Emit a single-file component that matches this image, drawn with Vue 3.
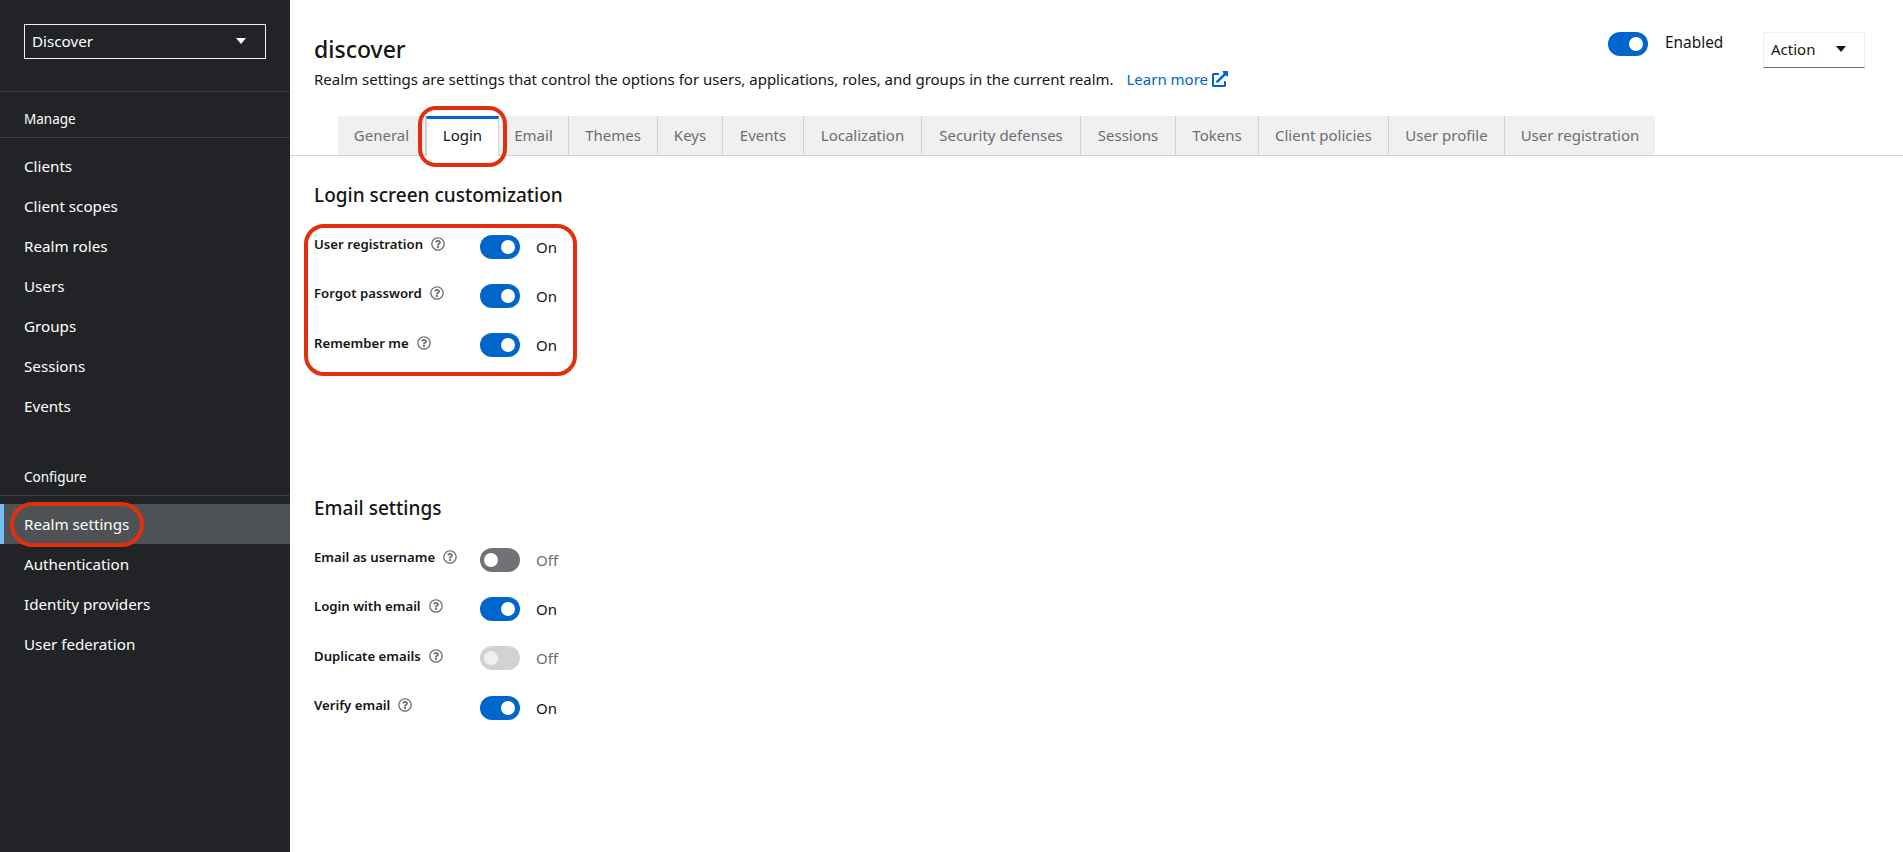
<script setup>
const manage = ['Clients', 'Client scopes', 'Realm roles', 'Users', 'Groups', 'Sessions', 'Events']
const configure = ['Realm settings', 'Authentication', 'Identity providers', 'User federation']
const tabs = [
  { name: 'General', w: 88 }, { name: 'Login', w: 73, active: true }, { name: 'Email', w: 70 },
  { name: 'Themes', w: 89 }, { name: 'Keys', w: 65 }, { name: 'Events', w: 81 },
  { name: 'Localization', w: 118 }, { name: 'Security defenses', w: 159 }, { name: 'Sessions', w: 95 },
  { name: 'Tokens', w: 83 }, { name: 'Client policies', w: 130 }, { name: 'User profile', w: 116 },
  { name: 'User registration', w: 150 }
]
const loginRows = [
  { label: 'User registration', on: true },
  { label: 'Forgot password', on: true },
  { label: 'Remember me', on: true }
]
const emailRows = [
  { label: 'Email as username', on: false },
  { label: 'Login with email', on: true },
  { label: 'Duplicate emails', on: false, disabled: true },
  { label: 'Verify email', on: true }
]
const q = 'M256 8C119.043 8 8 119.083 8 256c0 136.997 111.043 248 248 248s248-111.003 248-248C504 119.083 392.957 8 256 8zm0 448c-110.532 0-200-89.431-200-200 0-110.495 89.472-200 200-200 110.491 0 200 89.471 200 200 0 110.53-89.431 200-200 200zm107.244-255.2c0 67.052-72.421 68.084-72.421 92.863V300c0 6.627-5.373 12-12 12h-45.647c-6.627 0-12-5.373-12-12v-8.659c0-35.745 27.1-50.034 47.579-61.516 17.561-9.845 28.324-16.541 28.324-29.579 0-17.246-21.999-28.693-39.784-28.693-23.189 0-33.894 10.977-48.942 29.969-4.057 5.12-11.46 6.071-16.666 2.124l-27.824-21.098c-5.107-3.872-6.251-11.066-2.644-16.363C184.846 131.491 214.94 112 261.794 112c49.071 0 101.45 38.304 101.45 88.8zM298 368c0 23.159-18.841 42-42 42s-42-18.841-42-42 18.841-42 42-42 42 18.841 42 42z'
</script>

<template>
  <div class="page">
    <aside class="sidebar">
      <div class="realm-wrap">
        <div class="realm">
          <span>Discover</span>
          <svg class="caret" viewBox="0 0 10 6" width="10" height="6"><path d="M0 0h10L5 6z" fill="#fff" /></svg>
        </div>
      </div>
      <div class="group-title first">Manage</div>
      <ul class="nav">
        <li v-for="item in manage" :key="item">{{ item }}</li>
      </ul>
      <div class="group-title second">Configure</div>
      <ul class="nav">
        <li v-for="item in configure" :key="item" :class="{ current: item === 'Realm settings' }">{{ item }}</li>
      </ul>
      <div class="mark mark-realm"></div>
    </aside>

    <main class="main">
      <header class="head">
        <div>
          <h1>discover</h1>
          <p class="desc">
            Realm settings are settings that control the options for users, applications, roles, and groups in the current realm.
            <a class="learn">Learn more
              <svg viewBox="0 0 512 512" width="16" height="16"><path fill="#06c" d="M432 320h-32a16 16 0 0 0-16 16v112H64V128h144a16 16 0 0 0 16-16V80a16 16 0 0 0-16-16H48a48 48 0 0 0-48 48v352a48 48 0 0 0 48 48h352a48 48 0 0 0 48-48V336a16 16 0 0 0-16-16zM488 0H360c-21.37 0-32.05 25.91-17 41l35.73 35.73L135 320.37a24 24 0 0 0 0 34L157.67 377a24 24 0 0 0 34 0l243.61-243.68L471 169c15 15 41 4.5 41-17V24a24 24 0 0 0-24-24z" /></svg>
            </a>
          </p>
        </div>
        <div class="tools">
          <span class="switch on"><i></i></span>
          <span class="enabled">Enabled</span>
          <div class="action">
            <span>Action</span>
            <svg viewBox="0 0 10 6" width="10" height="6"><path d="M0 0h10L5 6z" fill="#151515" /></svg>
          </div>
        </div>
      </header>

      <div class="tabbar">
        <div
          v-for="t in tabs"
          :key="t.name"
          class="tab"
          :class="{ active: t.active }"
          :style="{ width: t.w + 'px' }"
        >{{ t.name }}</div>
      </div>

      <section class="section">
        <h2>Login screen customization</h2>
        <div class="rows">
          <div v-for="r in loginRows" :key="r.label" class="row">
            <div class="label">
              <b>{{ r.label }}</b>
              <svg viewBox="0 0 512 512" width="14" height="14"><path fill="#6a6e73" :d="q" /></svg>
            </div>
            <span class="switch" :class="{ on: r.on }"><i></i></span>
            <span class="state">On</span>
          </div>
        </div>
      </section>

      <section class="section email">
        <h2>Email settings</h2>
        <div class="rows">
          <div v-for="r in emailRows" :key="r.label" class="row">
            <div class="label">
              <b>{{ r.label }}</b>
              <svg viewBox="0 0 512 512" width="14" height="14"><path fill="#6a6e73" :d="q" /></svg>
            </div>
            <span class="switch" :class="{ on: r.on, disabled: r.disabled }"><i></i></span>
            <span class="state" :class="{ off: !r.on }">{{ r.on ? 'On' : 'Off' }}</span>
          </div>
        </div>
      </section>

      <div class="mark mark-tab"></div>
      <div class="mark mark-rows"></div>
    </main>
  </div>
</template>

<style>
html, body { margin: 0; background: #fff; overflow: hidden; }
</style>

<style scoped>
.page {
  display: flex;
  height: 852px;
  font-family: "Noto Sans", "Open Sans", sans-serif;
  color: #151515;
}
.sidebar {
  position: relative;
  width: 290px;
  flex: none;
  background: #212326;
  color: #fff;
  font-size: 15.2px;
}
.realm-wrap {
  padding: 24px 24px 32px;
  border-bottom: 1px solid #3c3f42;
}
.realm {
  height: 35px;
  box-sizing: border-box;
  border: 1px solid #f0f0f0;
  padding: 0 19px 2px 7px;
  display: flex;
  align-items: center;
  justify-content: space-between;
}
.group-title {
  font-size: 13.5px;
  padding-left: 24px;
  display: flex;
  align-items: center;
  border-bottom: 1px solid #3c3f42;
}
.group-title.first {
  height: 37px;
  padding-top: 8px;
}
.group-title.second {
  height: 37px;
  margin-top: 32px;
}
.nav {
  list-style: none;
  margin: 0;
  padding: 8px 0 0;
}
.nav li {
  height: 40px;
  line-height: 40px;
  padding-left: 24px;
}
.nav li.current {
  background: #4f5255;
  box-shadow: inset 4px 0 0 #73bcf7;
}
.main {
  position: relative;
  flex: 1;
  min-width: 0;
}
.head {
  display: flex;
  justify-content: space-between;
  padding: 34px 38px 0 24px;
  height: 116px;
  box-sizing: border-box;
}
h1 {
  margin: 0;
  font-size: 23px;
  line-height: 30px;
  font-weight: 500;
}
.desc {
  margin: 3px 0 0;
  font-size: 15px;
  line-height: 24px;
}
.learn {
  color: #06c;
  margin-left: 9px;
  display: inline-flex;
  align-items: center;
  gap: 4px;
  vertical-align: bottom;
}
.tools {
  display: flex;
  align-items: flex-start;
  margin-top: -2px;
  height: 36px;
}
.enabled {
  font-size: 15.4px;
  line-height: 22px;
  margin-left: 17px;
  width: 98px;
}
.action {
  width: 102px;
  height: 36px;
  box-sizing: border-box;
  border: 1px solid #f0f0f0;
  border-bottom-color: #6a6e73;
  display: flex;
  align-items: center;
  justify-content: space-between;
  padding: 0 18px 2px 7px;
  font-size: 15px;
}
.tabbar {
  display: flex;
  padding-left: 48px;
  height: 39px;
  border-bottom: 1px solid #d2d2d2;
}
.tab {
  height: 39px;
  box-sizing: border-box;
  flex: none;
  background: #f0f0f0;
  color: #6a6e73;
  border-right: 1px solid #d2d2d2;
  font-size: 15px;
  display: flex;
  align-items: center;
  justify-content: center;
  padding-bottom: 2px;
}
.tab.active {
  background: #fff;
  color: #151515;
  height: 40px;
  border-top: 3px solid #06c;
  border-left: 1px solid #d2d2d2;
  padding-bottom: 5px;
}
.tab:last-child { border-right: 0; }
.section {
  padding: 25px 24px 0;
}
.section.email { padding-top: 124px; }
h2 {
  margin: 0;
  font-size: 19px;
  line-height: 28px;
  font-weight: 500;
}
.rows { margin-top: 13px; }
.row {
  height: 49.33px;
  display: flex;
  align-items: center;
}
.label {
  width: 166px;
  flex: none;
  display: flex;
  align-items: center;
  gap: 8px;
  margin-top: -5px;
}
.label b {
  font-size: 13.2px;
  font-weight: 600;
}
.switch {
  width: 40px;
  height: 24px;
  border-radius: 12px;
  background: #707276;
  flex: none;
  position: relative;
}
.switch i {
  position: absolute;
  top: 5px;
  left: 4px;
  width: 14px;
  height: 14px;
  border-radius: 50%;
  background: #fff;
}
.switch.on { background: #06c; }
.switch.on i { left: 21px; }
.switch.disabled { background: #d2d2d2; }
.switch.disabled i { background: #f0f0f0; }
.state {
  margin-left: 16px;
  font-size: 15px;
}
.state.off { color: #6a6e73; }
.mark {
  position: absolute;
  border: 4px solid #e2300f;
  box-sizing: border-box;
  pointer-events: none;
}
.mark-realm {
  left: 10px;
  top: 502px;
  width: 134px;
  height: 45px;
  border-radius: 23px;
}
.mark-tab {
  left: 128px;
  top: 106px;
  width: 89px;
  height: 61px;
  border-radius: 18px;
}
.mark-rows {
  left: 14px;
  top: 224px;
  width: 273px;
  height: 152px;
  border-radius: 20px;
}
</style>
